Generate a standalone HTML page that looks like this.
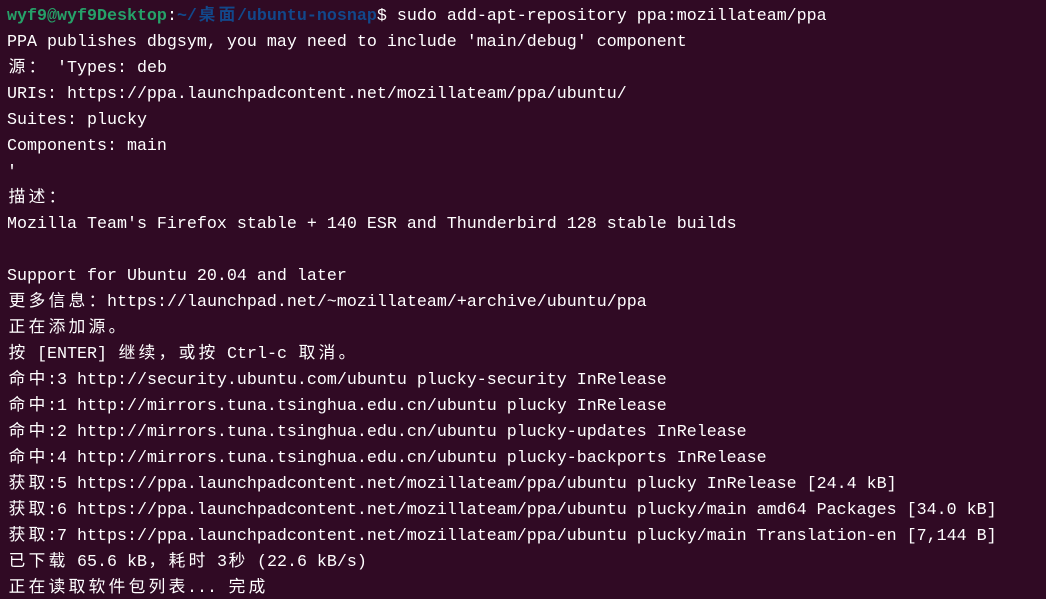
<!DOCTYPE html>
<html><head><meta charset="utf-8"><style>
html,body{margin:0;background:#300a24;width:1046px;height:599px;overflow:hidden}
.t{padding:4px 0 0 7px;font-family:"Liberation Mono",monospace;font-size:16.67px;color:#ffffff}
.t div{height:26px;line-height:26px;white-space:pre;overflow:visible}
i{font-style:normal;display:inline-block;width:20px;text-align:center;font-family:"Noto Sans CJK SC",sans-serif;line-height:0}
.g{color:#26a269;font-weight:bold}.b{color:#12488b;font-weight:bold}
</style></head><body><div class="t">
<div><span class="g">wyf9@wyf9Desktop</span>:<span class="b">~/<i>桌</i><i>面</i>/ubuntu-nosnap</span>$ sudo add-apt-repository ppa:mozillateam/ppa</div>
<div>PPA publishes dbgsym, you may need to include 'main/debug' component</div>
<div><i>源</i><i>：</i> 'Types: deb</div>
<div>URIs: https://ppa.launchpadcontent.net/mozillateam/ppa/ubuntu/</div>
<div>Suites: plucky</div>
<div>Components: main</div>
<div>'</div>
<div><i>描</i><i>述</i><i>：</i></div>
<div>Mozilla Team's Firefox stable + 140 ESR and Thunderbird 128 stable builds</div>
<div></div>
<div>Support for Ubuntu 20.04 and later</div>
<div><i>更</i><i>多</i><i>信</i><i>息</i><i>：</i>https://launchpad.net/~mozillateam/+archive/ubuntu/ppa</div>
<div><i>正</i><i>在</i><i>添</i><i>加</i><i>源</i><i>。</i></div>
<div><i>按</i> [ENTER] <i>继</i><i>续</i><i>，</i><i>或</i><i>按</i> Ctrl-c <i>取</i><i>消</i><i>。</i></div>
<div><i>命</i><i>中</i>:3 http://security.ubuntu.com/ubuntu plucky-security InRelease</div>
<div><i>命</i><i>中</i>:1 http://mirrors.tuna.tsinghua.edu.cn/ubuntu plucky InRelease</div>
<div><i>命</i><i>中</i>:2 http://mirrors.tuna.tsinghua.edu.cn/ubuntu plucky-updates InRelease</div>
<div><i>命</i><i>中</i>:4 http://mirrors.tuna.tsinghua.edu.cn/ubuntu plucky-backports InRelease</div>
<div><i>获</i><i>取</i>:5 https://ppa.launchpadcontent.net/mozillateam/ppa/ubuntu plucky InRelease [24.4 kB]</div>
<div><i>获</i><i>取</i>:6 https://ppa.launchpadcontent.net/mozillateam/ppa/ubuntu plucky/main amd64 Packages [34.0 kB]</div>
<div><i>获</i><i>取</i>:7 https://ppa.launchpadcontent.net/mozillateam/ppa/ubuntu plucky/main Translation-en [7,144 B]</div>
<div><i>已</i><i>下</i><i>载</i> 65.6 kB<i>，</i><i>耗</i><i>时</i> 3<i>秒</i> (22.6 kB/s)</div>
<div><i>正</i><i>在</i><i>读</i><i>取</i><i>软</i><i>件</i><i>包</i><i>列</i><i>表</i>... <i>完</i><i>成</i></div>
</div></body></html>
